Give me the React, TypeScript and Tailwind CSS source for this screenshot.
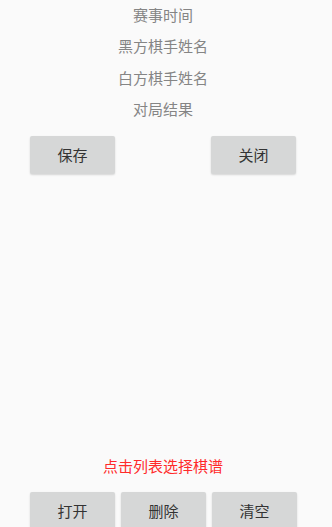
import React from 'react';

const Btn: React.FC<{ label: string }> = ({ label }) => (
  <button className="w-[85px] h-[38px] rounded-[2px] bg-[#d6d7d7] text-[15px] text-[#333] shadow-[0_1px_2px_rgba(0,0,0,0.15)]">
    {label}
  </button>
);

export default function App() {
  const fields = ['赛事时间', '黑方棋手姓名', '白方棋手姓名', '对局结果'];
  return (
    <div
      className="h-[530px] overflow-hidden bg-[#fafafa] flex flex-col"
      style={{ fontFamily: '"Noto Sans CJK SC", "Noto Sans", sans-serif' }}
    >
      {/* Info fields */}
      <div className="flex flex-col items-center -mt-[1.5px] pr-[6px]">
        {fields.map((f) => (
          <div key={f} className="h-[31.5px] leading-[31.5px] text-[15px] text-[#858585]">
            {f}
          </div>
        ))}
      </div>

      <div className="flex justify-between pl-[30px] pr-[36px] mt-[11.5px]">
        <Btn label="保存" />
        <Btn label="关闭" />
      </div>

      <div className="flex-1" />

      <div className="text-center text-[15px] leading-[20px] text-[#ff2a2a] pr-[6px]">点击列表选择棋谱</div>

      <div className="flex gap-[6px] pl-[30px] mt-[16px]">
        <Btn label="打开" />
        <Btn label="删除" />
        <Btn label="清空" />
      </div>
    </div>
  );
}
